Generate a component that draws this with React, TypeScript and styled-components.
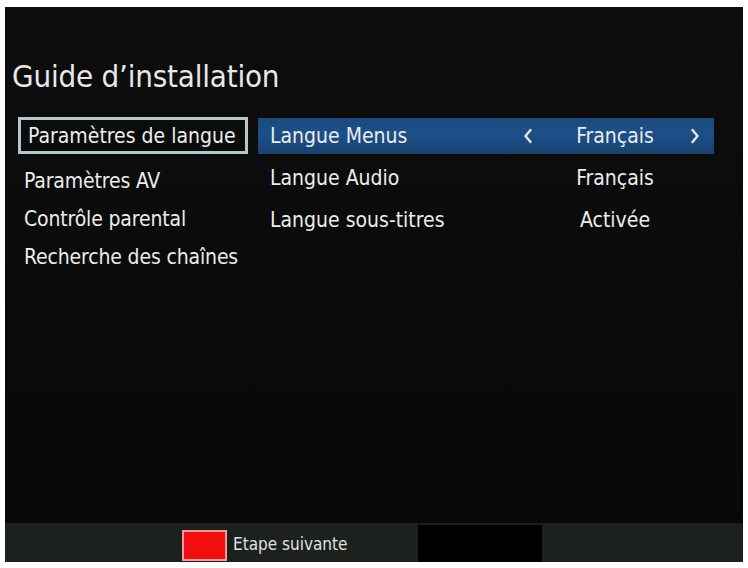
import React from "react";
import styled, { createGlobalStyle } from "styled-components";

const GlobalStyle = createGlobalStyle`
  html, body { margin: 0; padding: 0; background: #ffffff; }
  body { font-family: "DejaVu Sans Condensed", "DejaVu Sans", sans-serif; font-stretch: condensed; }
`;

const Screen = styled.div`
  margin: 7px 0 0 5px;
  width: 738px;
  height: 555px;
  background: linear-gradient(to bottom, #0d0d0d 0%, #0a0a0a 60%, #070807 100%);
  display: flex;
  flex-direction: column;
  color: #ececec;
  overflow: hidden;
`;

const Title = styled.h1`
  margin: 0;
  padding: 49px 0 0 7px;
  height: 60px;
  box-sizing: border-box;
  font-size: 31px;
  font-weight: normal;
  line-height: 40px;
  letter-spacing: -0.2px;
  color: #e8e8e8;
`;

const Main = styled.div`
  flex: 1;
  display: flex;
  align-items: flex-start;
  padding: 50px 0 0 13px;
`;

const LeftMenu = styled.div`
  width: 230px;
  display: flex;
  flex-direction: column;
`;

const MenuItem = styled.div<{ $selected?: boolean }>`
  box-sizing: border-box;
  height: ${(p) => (p.$selected ? "37px" : "38px")};
  margin-bottom: ${(p) => (p.$selected ? "8px" : "0")};
  border: ${(p) => (p.$selected ? "3px solid #b6c7cb" : "none")};
  padding-left: ${(p) => (p.$selected ? "7px" : "6px")};
  display: flex;
  align-items: center;
  font-size: 21px;
  letter-spacing: ${(p) => (p.$selected ? "0" : "-0.15px")};
  white-space: nowrap;
`;

const RightPanel = styled.div`
  margin-left: 10px;
  margin-top: 1px;
  width: 456px;
  display: flex;
  flex-direction: column;
  gap: 6px;
`;

const SettingRow = styled.div<{ $active?: boolean }>`
  height: 36px;
  display: grid;
  grid-template-columns: 238px 40px 134px 26px;
  padding-left: 12px;
  align-items: center;
  font-size: 21px;
  white-space: nowrap;
  background: ${(p) =>
    p.$active
      ? "linear-gradient(to bottom, #1b4a7f 0%, #1d5089 45%, #17426f 100%)"
      : "transparent"};
`;

const Label = styled.span``;

const ArrowCell = styled.span`
  display: flex;
  justify-content: center;
  align-items: center;
`;

const Value = styled.span`
  text-align: center;
`;

const Footer = styled.div`
  height: 39px;
  background: #1d211d;
  display: flex;
  align-items: flex-end;
  padding-left: 177px;
`;

const KeyHint = styled.div`
  display: flex;
  align-items: center;
  gap: 6px;
  height: 37px;
  font-size: 17px;
  color: #e0e0e0;
`;

const RedKey = styled.span`
  box-sizing: border-box;
  width: 45px;
  height: 31px;
  background: #f20e0e;
  border: 2px solid #f39b9b;
  margin-top: 4px;
`;

const BlackBox = styled.div`
  margin-left: auto;
  margin-right: 201px;
  width: 124px;
  height: 37px;
  background: #000;
`;

const Chevron = ({ dir }: { dir: "left" | "right" }) => (
  <svg width="10" height="16" viewBox="0 0 10 16">
    <path
      d={dir === "left" ? "M7.5 2 L2.5 8 L7.5 14" : "M2.5 2 L7.5 8 L2.5 14"}
      fill="none"
      stroke="#e6e6e6"
      strokeWidth="2.4"
      strokeLinecap="round"
      strokeLinejoin="round"
    />
  </svg>
);

const menu = [
  "Paramètres de langue",
  "Paramètres AV",
  "Contrôle parental",
  "Recherche des chaînes",
];

const settings = [
  { label: "Langue Menus", value: "Français", active: true },
  { label: "Langue Audio", value: "Français" },
  { label: "Langue sous-titres", value: "Activée" },
];

export default function App() {
  return (
    <>
      <GlobalStyle />
      <Screen>
        <Title>Guide d’installation</Title>
        <Main>
          <LeftMenu>
            {menu.map((m, i) => (
              <MenuItem key={m} $selected={i === 0}>
                {m}
              </MenuItem>
            ))}
          </LeftMenu>
          <RightPanel>
            {settings.map((s) => (
              <SettingRow key={s.label} $active={s.active}>
                <Label>{s.label}</Label>
                <ArrowCell>{s.active && <Chevron dir="left" />}</ArrowCell>
                <Value>{s.value}</Value>
                <ArrowCell>{s.active && <Chevron dir="right" />}</ArrowCell>
              </SettingRow>
            ))}
          </RightPanel>
        </Main>
        <Footer>
          <KeyHint>
            <RedKey />
            Etape suivante
          </KeyHint>
          <BlackBox />
        </Footer>
      </Screen>
    </>
  );
}
